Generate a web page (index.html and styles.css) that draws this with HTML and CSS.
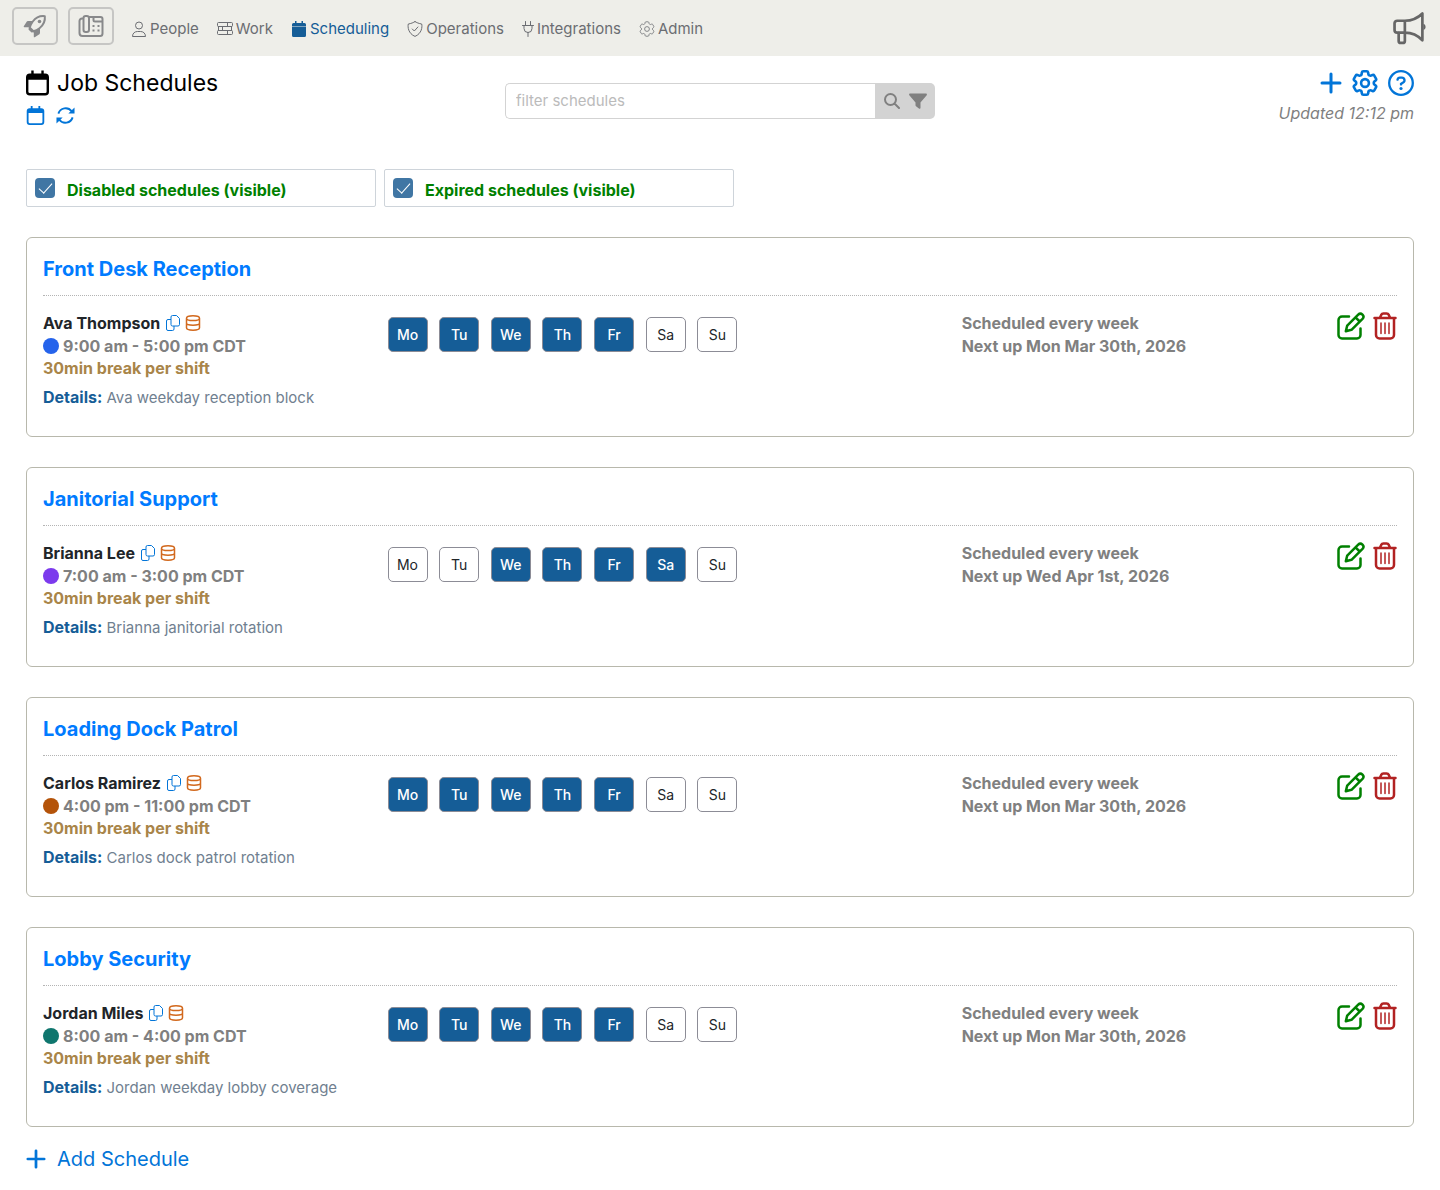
FILE: index.html
```html
<!DOCTYPE html>
<html lang="en">

<head>
    <meta charset="utf-8">
    <meta name="viewport" content="width=device-width, initial-scale=1.0">
    <title>Job Schedules</title>
    <link rel="stylesheet" href="styles.css">
</head>

<body>
    <svg class="sprite" aria-hidden="true">
        <symbol id="i-rocket" viewBox="0 0 24 24">
            <path fill="none" stroke="currentColor" stroke-width="2" stroke-linejoin="round" d="M21.800 2.200C16 1.500 12.500 4 9.800 7.500 8.300 9.500 7.400 11.500 6.800 13.600L10.400 17.200c2.100-.6 4.100-1.500 6.100-3C20 11.500 22.500 8 21.800 2.200z" />
            <path fill="currentColor" d="M9.500 7H5.500c-1 0-1.600.4-2 1L.8 12.300c-.3.5 0 .9.500.9H7zM17 14.500v4c0 1-.4 1.600-1 2l-4.300 2.700c-.5.3-.9 0-.9-.5V17zM6 12.500l5.500 5.500-3 .5-3-3z" />
            <circle cx="16.500" cy="7.500" r="1.800" fill="currentColor" />
        </symbol>
        <symbol id="i-fax" viewBox="0 0 26 24">
            <g fill="none" stroke="currentColor" stroke-width="2">
                <rect x="5.500" y="2" width="5.500" height="16" rx="2.200" />
                <path d="M5.500 4.500H4A2.500 2.500 0 0 0 1.500 7v12a3 3 0 0 0 3 3H22a2.500 2.500 0 0 0 2.500-2.500V5A2 2 0 0 0 22.500 3H11M15.500 3v3a1.500 1.500 0 0 0 1.500 1.500h7.500" />
            </g>
            <path fill="currentColor" d="M14.500 11h2v2h-2zM19.500 11h2v2h-2zM14.500 15.500h2v2h-2zM19.500 15.500h2v2h-2z" />
        </symbol>
        <symbol id="i-user" viewBox="0 0 16 16">
            <g fill="none" stroke="currentColor">
                <circle cx="8" cy="4.500" r="3.500" />
                <path d="M1.500 15.500C1.500 12 4 10.500 6.500 10.500h3c2.500 0 5 1.500 5 5z" stroke-linejoin="round" />
            </g>
        </symbol>
        <symbol id="i-work" viewBox="0 0 16 16">
            <g fill="none" stroke="currentColor">
                <rect x=".5" y="1.500" width="15" height="4" rx="1" />
                <rect x="1.500" y="5.500" width="13" height="4" />
                <rect x=".5" y="9.500" width="15" height="4" rx="1" />
                <path d="M10.500 1.500v4M5.500 5.500v4M10.500 9.500v4" />
            </g>
        </symbol>
        <symbol id="i-calendar-fill" viewBox="0 0 16 16">
            <path fill="currentColor" d="M4 0h1.500v2h5V0H12v2h1.500A1.500 1.500 0 0 1 15 3.500V5H1V3.500A1.500 1.500 0 0 1 2.500 2H4zM1 5.500h14v9a1.500 1.500 0 0 1-1.500 1.500h-11A1.500 1.500 0 0 1 1 14.500z" />
        </symbol>
        <symbol id="i-shield" viewBox="0 0 16 16">
            <path fill="none" stroke="currentColor" stroke-linecap="round" stroke-linejoin="round" d="M8 .6C6.500 1.600 4 2.600 1.300 3 .6 6 1.200 12.500 8 15.400 14.800 12.500 15.400 6 14.700 3 12 2.600 9.500 1.600 8 .6zM5.300 8l2 2 3.600-4" />
        </symbol>
        <symbol id="i-plug" viewBox="0 0 12 16">
            <path fill="none" stroke="currentColor" stroke-linecap="round" stroke-linejoin="round" d="M3.500.5v4M8.500.5v4M.5 4.500h11M2 4.500v3a4 4 0 0 0 8 0v-3M6 11.500v4" />
        </symbol>
        <symbol id="i-gear" viewBox="2 2 20 20">
            <path fill="none" stroke="currentColor" stroke-linejoin="round" d="M9.594 3.94c.09-.542.56-.94 1.110-.94h2.593c.55 0 1.020.398 1.110.94l.213 1.281c.063.374.313.686.645.87.074.04.147.083.22.127.325.196.72.257 1.075.124l1.217-.456a1.125 1.125 0 0 1 1.370.49l1.296 2.247a1.125 1.125 0 0 1-.26 1.431l-1.003.827c-.293.241-.438.613-.43.992a7.723 7.723 0 0 1 0 .255c-.008.378.137.75.43.991l1.004.827c.424.35.534.955.26 1.430l-1.298 2.247a1.125 1.125 0 0 1-1.369.491l-1.217-.456c-.355-.133-.75-.072-1.076.124a6.470 6.470 0 0 1-.22.128c-.331.183-.581.495-.644.869l-.213 1.281c-.09.543-.56.94-1.110.94h-2.594c-.55 0-1.019-.398-1.110-.94l-.213-1.281c-.062-.374-.312-.686-.644-.87a6.520 6.520 0 0 1-.22-.127c-.325-.196-.72-.257-1.076-.124l-1.217.456a1.125 1.125 0 0 1-1.369-.49l-1.297-2.247a1.125 1.125 0 0 1 .26-1.431l1.004-.827c.292-.24.437-.613.43-.991a6.932 6.932 0 0 1 0-.255c.007-.38-.138-.751-.43-.992l-1.004-.827a1.125 1.125 0 0 1-.26-1.430l1.297-2.247a1.125 1.125 0 0 1 1.370-.491l1.216.456c.356.133.751.072 1.076-.124.072-.044.146-.086.22-.128.332-.183.582-.495.644-.869l.214-1.280ZM15 12a3 3 0 1 1-6 0 3 3 0 0 1 6 0Z" />
        </symbol>
        <symbol id="i-megaphone" viewBox="0 0 32 32">
            <g fill="none" stroke="currentColor" stroke-width="2.600" stroke-linejoin="round" stroke-linecap="round">
                <path d="M11.500 8.500H4A2.500 2.500 0 0 0 1.500 11v6.500A2.500 2.500 0 0 0 4 20h7.500zM11.500 8.500c7 0 12-2 17-7v26C23.500 22 18.500 20 11.500 20" />
                <path d="M5.500 20.500V28a2 2 0 0 0 2 2h2a2 2 0 0 0 2-2v-7.500" />
            </g>
            <path fill="currentColor" d="M29.500 11.500c2.800 1 2.800 5 0 6z" />
        </symbol>
        <symbol id="i-calendar" viewBox="0 0 24 26">
            <path fill="currentColor" fill-rule="evenodd" d="M5.500 0h2.500v3h8V0h2.500v3H20a4 4 0 0 1 4 4v15a4 4 0 0 1-4 4H4a4 4 0 0 1-4-4V7a4 4 0 0 1 4-4h1.500zM2.500 9.500V22A1.500 1.500 0 0 0 4 23.500h16a1.500 1.500 0 0 0 1.500-1.500V9.500z" />
        </symbol>
        <symbol id="i-sync" viewBox="0 0 20 20">
            <g fill="none" stroke="currentColor" stroke-width="2">
                <path d="M2.500 8A8 8 0 0 1 16.500 5.500M17.500 12A8 8 0 0 1 3.500 14.500" />
            </g>
            <path fill="currentColor" d="M19.500 1.500V8H13zM.5 18.500V12H7z" />
        </symbol>
        <symbol id="i-search" viewBox="0 0 16 16">
            <path fill="none" stroke="currentColor" stroke-width="2" stroke-linecap="round" d="M12 6.500a5.500 5.500 0 1 1-11 0 5.500 5.500 0 0 1 11 0zM10.500 10.500L15 15" />
        </symbol>
        <symbol id="i-filter" viewBox="0 0 18 16">
            <path fill="currentColor" d="M1.200.5h15.600c1 0 1.500 1 .9 1.800L11.500 9.500v5.200c0 .9-.9 1.300-1.600.8L7 13.300a1.200 1.200 0 0 1-.5-1V9.500L.3 2.300C-.3 1.500.2.5 1.200.5z" />
        </symbol>
        <symbol id="i-plus" viewBox="0 0 22 22">
            <path fill="none" stroke="currentColor" stroke-width="3" stroke-linecap="round" d="M11 2v18M2 11h18" />
        </symbol>
        <symbol id="i-help" viewBox="0 0 26 26">
            <g fill="none" stroke="currentColor" stroke-width="2.300" stroke-linecap="round">
                <circle cx="13" cy="13" r="11.800" />
                <path d="M9.500 9.700A2.500 2.500 0 0 1 12 7.700h1.800a2.600 2.600 0 0 1 1.300 4.900L13 13.900v.6" />
            </g>
            <circle cx="13" cy="18.500" r="1.600" fill="currentColor" />
        </symbol>
        <symbol id="i-copy" viewBox="0 0 16 16">
            <path fill="none" stroke="currentColor" stroke-linejoin="round" d="M7.500.5h4L14.500 3.500v6a1.500 1.500 0 0 1-1.500 1.500H7.500A1.500 1.500 0 0 1 6 9.500V2A1.500 1.500 0 0 1 7.500.5zM6 4.500H3A1.500 1.500 0 0 0 1.500 6v8A1.500 1.500 0 0 0 3 15.500h4.500A1.500 1.500 0 0 0 9 14v-3" />
        </symbol>
        <symbol id="i-db" viewBox="0 0 16 16">
            <path fill="none" stroke="currentColor" stroke-width="1.500" d="M1.500 3.200C1.500 1.800 3.500.8 8 .8s6.500 1 6.500 2.400S12.500 5.600 8 5.600 1.500 4.600 1.500 3.200zM1.500 3.200v9.600c0 1.400 2 2.400 6.500 2.400s6.500-1 6.500-2.400V3.200M1.500 8c0 1.400 2 2.200 6.500 2.200s6.500-.8 6.500-2.200" />
        </symbol>
        <symbol id="i-edit" viewBox="0 0 28 28">
            <g fill="none" stroke="currentColor" stroke-width="2.500" stroke-linecap="round" stroke-linejoin="round">
                <path d="M12 4.500H5A3.500 3.500 0 0 0 1.500 8v15A3.500 3.500 0 0 0 5 26.500h15a3.500 3.500 0 0 0 3.500-3.500v-6.500" />
                <path d="M8.800 19.200l1.400-5.600L21.200 2.600a3.100 3.100 0 0 1 4.300 0 3.100 3.100 0 0 1 0 4.300L14.500 17.800zM18.500 5.300l4.200 4.200" />
            </g>
        </symbol>
        <symbol id="i-trash" viewBox="0 0 24 28">
            <g fill="none" stroke="currentColor" stroke-linecap="round" stroke-linejoin="round">
                <path stroke-width="2.500" d="M1.500 6h21M3 6v17a3.500 3.500 0 0 0 3.500 3.500h11A3.500 3.500 0 0 0 21 23V6M7 5.500l1.200-2.600A2.500 2.500 0 0 1 10.500 1.500h3a2.500 2.500 0 0 1 2.300 1.400L17 5.500" />
                <path stroke-width="1.500" d="M8 11v10.500M12 11v10.500M16 11v10.500" />
            </g>
        </symbol>
    </svg>

    <header class="topbar">
        <button class="tool" aria-label="Launch"><svg class="tool-icon"><use href="#i-rocket" /></svg></button>
        <button class="tool" aria-label="Fax"><svg class="tool-icon wide"><use href="#i-fax" /></svg></button>
        <nav>
            <a href="#people"><svg><use href="#i-user" /></svg>People</a>
            <a href="#work"><svg><use href="#i-work" /></svg>Work</a>
            <a href="#scheduling" class="active"><svg><use href="#i-calendar-fill" /></svg>Scheduling</a>
            <a href="#operations"><svg><use href="#i-shield" /></svg>Operations</a>
            <a href="#integrations"><svg class="narrow"><use href="#i-plug" /></svg>Integrations</a>
            <a href="#admin"><svg><use href="#i-gear" /></svg>Admin</a>
        </nav>
        <button class="announce" aria-label="Announcements"><svg><use href="#i-megaphone" /></svg></button>
    </header>

    <main>
        <section class="page-head">
            <div>
                <h1><svg><use href="#i-calendar" /></svg>Job Schedules</h1>
                <div class="views">
                    <button aria-label="Calendar view"><svg><use href="#i-calendar" /></svg></button>
                    <button aria-label="Refresh"><svg><use href="#i-sync" /></svg></button>
                </div>
            </div>
            <form class="search">
                <input type="text" placeholder="filter schedules" aria-label="Filter schedules">
                <div class="search-buttons">
                    <button type="button" aria-label="Search"><svg><use href="#i-search" /></svg></button>
                    <button type="button" aria-label="Filter"><svg class="funnel"><use href="#i-filter" /></svg></button>
                </div>
            </form>
            <div class="status">
                <div class="page-tools">
                    <button aria-label="Add"><svg class="add"><use href="#i-plus" /></svg></button>
                    <button aria-label="Settings"><svg class="cog"><use href="#i-gear" /></svg></button>
                    <button aria-label="Help"><svg><use href="#i-help" /></svg></button>
                </div>
                <p>Updated 12:12 pm</p>
            </div>
        </section>

        <section class="toggles">
            <label><input type="checkbox" checked><span>Disabled schedules (visible)</span></label>
            <label><input type="checkbox" checked><span>Expired schedules (visible)</span></label>
        </section>

        <section id="schedules"></section>

        <button class="add-schedule"><svg><use href="#i-plus" /></svg>Add Schedule</button>
    </main>

    <template>
        <article class="card">
            <h2><a href="#schedule"></a></h2>
            <div class="card-body">
                <div class="person">
                    <div class="name">
                        <span></span>
                        <button class="copy" aria-label="Copy"><svg><use href="#i-copy" /></svg></button>
                        <button class="db" aria-label="Records"><svg><use href="#i-db" /></svg></button>
                    </div>
                    <div class="time"><i class="dot"></i><span></span></div>
                    <div class="break">30min break per shift</div>
                    <div class="details"><b>Details:</b> <span></span></div>
                </div>
                <div class="days"></div>
                <div class="next">
                    <p>Scheduled every week<br>Next up <span></span></p>
                    <div class="actions">
                        <button class="edit" aria-label="Edit"><svg><use href="#i-edit" /></svg></button>
                        <button class="delete" aria-label="Delete"><svg><use href="#i-trash" /></svg></button>
                    </div>
                </div>
            </div>
        </article>
    </template>
    <script src="script.js"></script>
</body>

</html>
```
FILE: styles.css
```css
* {
    box-sizing: border-box;
}

body {
    margin: 0;
    background-color: white;
    color: #212529;
    font-family: Inter, "Liberation Sans", sans-serif;
    font-size: 15px;
    line-height: 22px;
}

h1,
h2,
p {
    margin: 0;
}

a {
    text-decoration: none;
}

button {
    display: flex;
    align-items: center;
    justify-content: center;
    padding: 0;
    border: 0;
    background: none;
    color: inherit;
    font: inherit;
    cursor: pointer;
}

svg {
    display: block;
    flex: none;
    width: 16px;
    height: 16px;
}

.sprite {
    position: absolute;
    width: 0;
    height: 0;
}

/* top bar */
.topbar {
    display: flex;
    align-items: flex-start;
    gap: 10px;
    height: 56px;
    padding: 7px 14px 0 12px;
    background-color: #eeeee9;
}

.tool {
    width: 46px;
    height: 38px;
    border: 2px solid #c6c6c4;
    border-radius: 5px;
    color: #88898b;
}

.tool-icon {
    width: 24px;
    height: 24px;
}

.tool-icon.wide {
    width: 26px;
}

nav {
    display: flex;
    gap: 18px;
    padding: 11px 0 0 7px;
}

nav a {
    display: flex;
    align-items: center;
    gap: 3px;
    color: #6b6d72;
}

nav a.active {
    color: #155d97;
}

nav .narrow {
    width: 12px;
}

.announce {
    margin: 5px 0 0 auto;
    color: #666;
}

.announce svg {
    width: 33px;
    height: 33px;
}

main {
    padding: 12px 26px;
}

/* page heading */
.page-head {
    display: grid;
    grid-template-columns: 1fr 430px 1fr;
    align-items: start;
}

h1 {
    display: flex;
    align-items: center;
    gap: 8px;
    color: black;
    font-size: 23px;
    font-weight: 400;
    line-height: 30px;
}

h1 svg {
    width: 23px;
    height: 26px;
}

.views {
    display: flex;
    gap: 11px;
    padding-top: 8px;
    color: #0275d8;
}

.views svg {
    width: 19px;
    height: 19px;
}

.search {
    display: flex;
    height: 36px;
    margin-top: 15px;
}

.search input {
    flex: 1;
    min-width: 0;
    padding: 0 10px;
    border: 1px solid #d3d3d3;
    border-right: 0;
    border-radius: 5px 0 0 5px;
    font: inherit;
}

.search input::placeholder {
    color: #bbb;
}

.search-buttons {
    display: flex;
    align-items: center;
    justify-content: center;
    gap: 9px;
    width: 60px;
    border-radius: 0 5px 5px 0;
    background-color: #d3d3d3;
    color: #808080;
}

.search-buttons .funnel {
    width: 18px;
}

.status {
    display: flex;
    flex-direction: column;
    align-items: flex-end;
    color: gray;
    font-size: 16px;
    font-style: italic;
}

.page-tools {
    display: flex;
    align-items: center;
    gap: 10px;
    height: 29px;
    color: #0275d8;
}

.page-tools svg {
    width: 26px;
    height: 26px;
}

.page-tools .add {
    width: 22px;
    height: 22px;
}

.page-tools .cog {
    stroke-width: 2;
}

.status p {
    padding-top: 5px;
}

/* visibility toggles */
.toggles {
    display: flex;
    gap: 8px;
    margin-top: 44px;
}

.toggles label {
    display: flex;
    align-items: center;
    gap: 12px;
    width: 350px;
    height: 38px;
    padding: 0 8px;
    border: 1px solid #ced4da;
    border-radius: 2px;
    color: green;
    font-size: 16px;
    font-weight: 700;
}

.toggles span {
    padding-top: 3px;
}

.toggles input {
    appearance: none;
    display: grid;
    place-items: center;
    width: 20px;
    height: 20px;
    margin: 0;
    border-radius: 4px;
    background-color: #4076a4;
}

.toggles input:checked::before {
    content: "";
    width: 6px;
    height: 12px;
    margin-bottom: 4px;
    border: solid white;
    border-width: 0 1px 1px 0;
    transform: rotate(42deg);
}

/* schedules */
#schedules {
    display: grid;
    gap: 30px;
    margin-top: 30px;
}

.card {
    min-height: 200px;
    padding: 16px;
    border: 1px solid #b8b8ac;
    border-radius: 6px;
}

.card h2 {
    padding-bottom: 10px;
    border-bottom: 1px dotted #b4b4b4;
    font-size: 20px;
    line-height: 31px;
}

.card h2 a {
    color: #007bff;
}

.card-body {
    display: grid;
    grid-template-columns: repeat(12, 1fr);
    column-gap: 24px;
    padding-top: 16px;
}

.person {
    grid-column: span 3;
    font-size: 16px;
    font-weight: 700;
}

.name {
    display: flex;
    align-items: center;
    gap: 4px;
    height: 22px;
}

.copy {
    margin-left: 1px;
    color: #0275d8;
}

.db {
    color: #d2691e;
}

.time {
    display: flex;
    align-items: center;
    gap: 4px;
    height: 23px;
    color: gray;
}

.dot {
    width: 16px;
    height: 16px;
    border-radius: 50%;
}

.break {
    color: #a98549;
}

.details {
    margin-top: 7px;
    color: slategray;
    font-size: 15px;
    font-weight: 400;
}

.details b {
    color: #155d97;
    font-size: 16px;
}

.days {
    grid-column: span 5;
    display: flex;
    justify-content: space-between;
    max-width: 350px;
    padding-top: 5px;
}

.day {
    width: 40px;
    height: 35px;
    border: 1px solid #8c8c96;
    border-radius: 5px;
    font-size: 14px;
}

.day.on {
    background-color: #155d97;
    color: white;
    font-weight: 500;
}

.next {
    grid-column: span 4;
    display: flex;
    justify-content: space-between;
    align-items: flex-start;
    color: gray;
    font-size: 16px;
    font-weight: 700;
    line-height: 23px;
}

.actions {
    display: flex;
    gap: 8px;
}

.actions svg {
    width: 28px;
    height: 28px;
}

.edit {
    color: green;
}

.delete {
    color: #b22222;
}

.delete svg {
    width: 24px;
}

.add-schedule {
    gap: 11px;
    margin-top: 17px;
    color: #0275d8;
    font-size: 20px;
    line-height: 30px;
}

.add-schedule svg {
    width: 20px;
    height: 20px;
}
```
FILE: script.js
```js
const dayNames = ["Mo", "Tu", "We", "Th", "Fr", "Sa", "Su"];

const schedules = [
    { title: "Front Desk Reception", name: "Ava Thompson", time: "9:00 am - 5:00 pm CDT", color: "#2563eb", details: "Ava weekday reception block", days: [0, 1, 2, 3, 4], next: "Mon Mar 30th, 2026" },
    { title: "Janitorial Support", name: "Brianna Lee", time: "7:00 am - 3:00 pm CDT", color: "#7c3aed", details: "Brianna janitorial rotation", days: [2, 3, 4, 5], next: "Wed Apr 1st, 2026" },
    { title: "Loading Dock Patrol", name: "Carlos Ramirez", time: "4:00 pm - 11:00 pm CDT", color: "#b45309", details: "Carlos dock patrol rotation", days: [0, 1, 2, 3, 4], next: "Mon Mar 30th, 2026" },
    { title: "Lobby Security", name: "Jordan Miles", time: "8:00 am - 4:00 pm CDT", color: "#0f766e", details: "Jordan weekday lobby coverage", days: [0, 1, 2, 3, 4], next: "Mon Mar 30th, 2026" }
];

const list = document.querySelector("#schedules");
const cardTemplate = document.querySelector("template");

schedules.forEach(schedule => {
    const card = cardTemplate.content.cloneNode(true);

    card.querySelector("h2 a").textContent = schedule.title;
    card.querySelector(".name span").textContent = schedule.name;
    card.querySelector(".time span").textContent = schedule.time;
    card.querySelector(".dot").style.backgroundColor = schedule.color;
    card.querySelector(".details span").textContent = schedule.details;
    card.querySelector(".next span").textContent = schedule.next;

    dayNames.forEach((day, index) => {
        const button = document.createElement("button");
        const on = schedule.days.includes(index);
        button.className = on ? "day on" : "day";
        button.setAttribute("aria-pressed", on);
        button.textContent = day;
        card.querySelector(".days").appendChild(button);
    });

    list.appendChild(card);
});
```
